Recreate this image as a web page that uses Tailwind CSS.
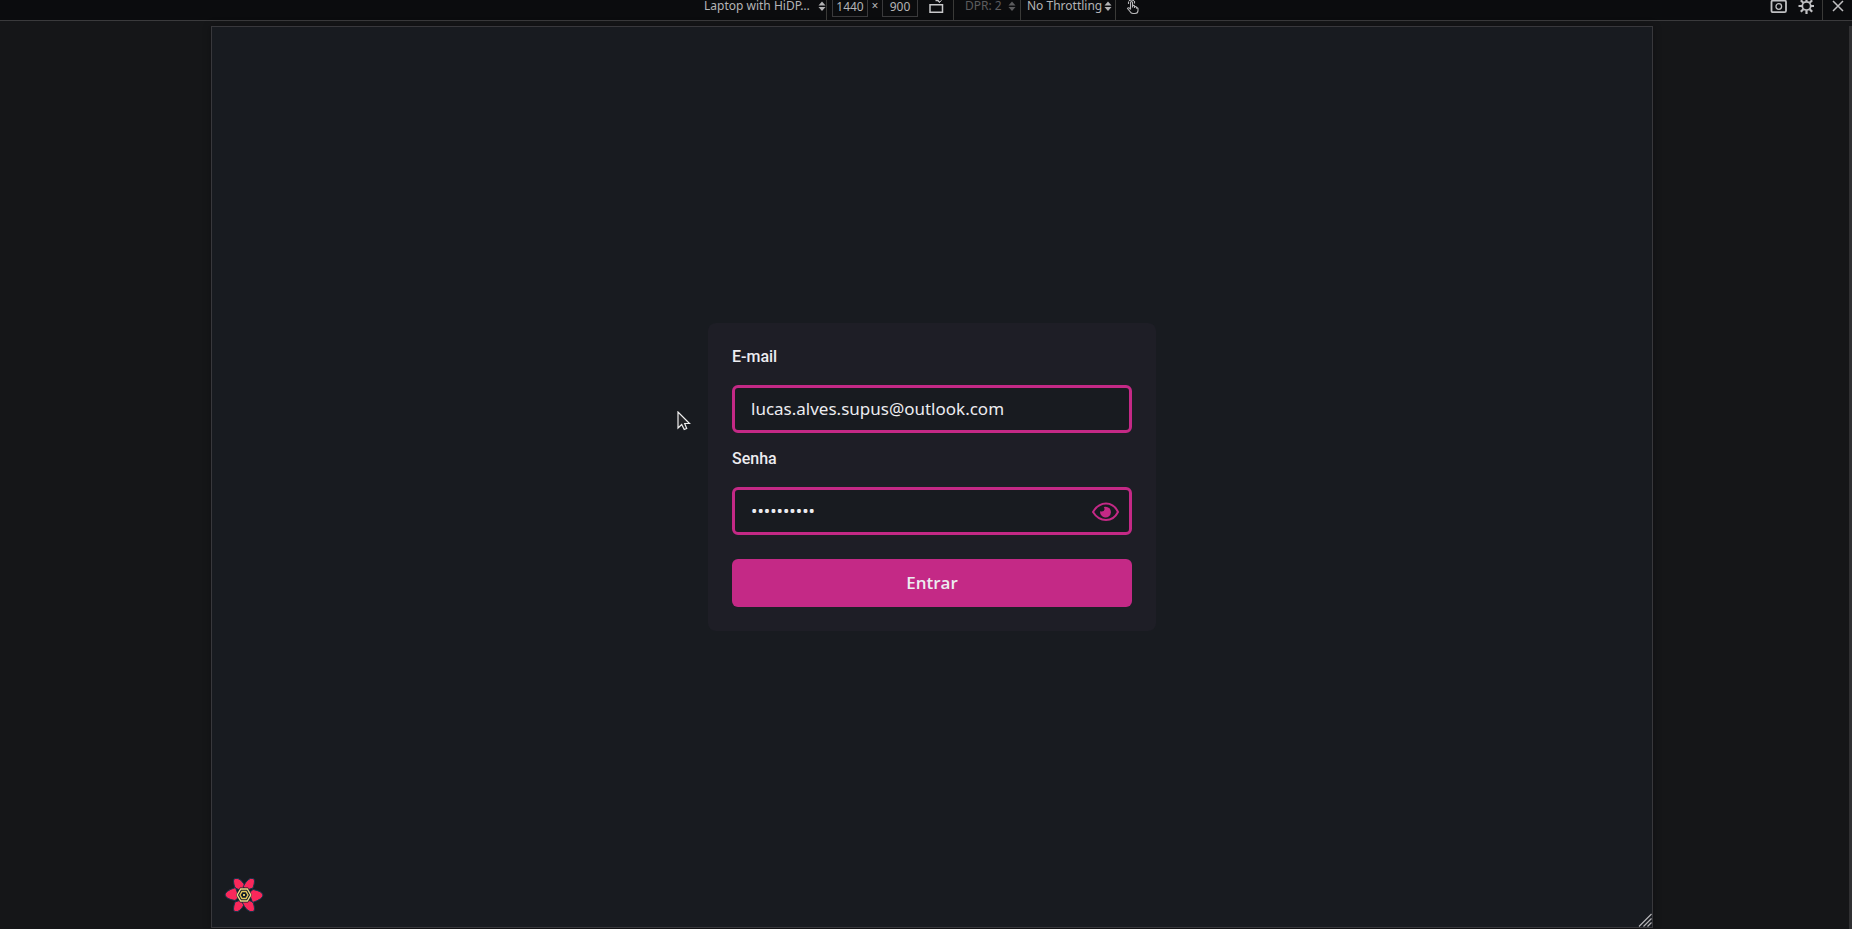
<!DOCTYPE html>
<html lang="pt-BR">
<head>
<meta charset="utf-8">
<title>Entrar</title>
<script src="https://cdn.jsdelivr.net/npm/@tailwindcss/browser@4"></script>
</head>
<body class="min-h-screen flex flex-col bg-[#151618] text-[#b4b4b6] font-['Noto_Sans',sans-serif] overflow-hidden">
<header class="grid grid-cols-[1fr_444px_1fr] h-[21px] bg-[#0b0c0e] border-b border-[#3a3a3c] text-xs leading-3">
  <div></div>
  <div class="flex h-5">
    <div class="flex w-[123px] border-r border-[#3a3a38]">
      <select aria-label="Device" class="appearance-none w-[111px] h-4 leading-4 -mt-0.5"><option>Laptop with HiDP…</option></select>
      <svg class="w-2 h-3 ml-[3px]" viewBox="0 0 8 12" fill="currentColor"><path d="M.5 5.500 4 1.500 7.500 5.500zM.5 7h7L4 11z"/></svg>
    </div>
    <input aria-label="Width" value="1440" class="ml-[5px] w-9 h-[17px] pb-1 border border-t-0 border-[#3a3a3c] text-center">
    <span class="w-[14px] text-center">×</span>
    <input aria-label="Height" value="900" class="w-9 h-[17px] pb-1 border border-t-0 border-[#3a3a3c] text-center">
    <button aria-label="Rotate" class="w-[35px] h-4 pl-[11px]">
      <svg class="block w-4 h-4" viewBox="0 0 16 16" fill="none" stroke="#c8c8ca"><path d="M1 4.700h12.500v7.600H1z" stroke-width="1.500"/><path d="M6.500 .6h1.500q2 0 2.500 1.800" stroke-width="1.300"/><path d="M8.700 0 10.500 2.500 12.500 .2"/></svg>
    </button>
    <div class="flex w-[68px] pl-[11px] border-x border-[#3a3a38] text-[#5c5c5e]">
      <select aria-label="DPR" disabled class="appearance-none w-[43px] h-4 leading-4 -mt-0.5"><option>DPR: 2</option></select>
      <svg class="w-2 h-3" viewBox="0 0 8 12" fill="currentColor"><path d="M.5 5.500 4 1.500 7.500 5.500zM.5 7h7L4 11z"/></svg>
    </div>
    <div class="flex w-[95px] pl-[6px] border-r border-[#3a3a38]">
      <select aria-label="Throttling" class="appearance-none w-[77px] h-4 leading-4 -mt-0.5"><option>No Throttling</option></select>
      <svg class="w-2 h-3" viewBox="0 0 8 12" fill="currentColor"><path d="M.5 5.500 4 1.500 7.500 5.500zM.5 7h7L4 11z"/></svg>
    </div>
    <button aria-label="Touch simulation" class="ml-[9px] h-4 w-4 shrink-0">
      <svg class="block w-4 h-4" viewBox="0 0 16 16" fill="none" stroke="#b8b8ba"><path d="M5.500 9.500V2.500q0-1 1-1t1 1V7.500M7.500 7V5.800q1-1 2 0V8M9.500 7q1-1 2 .2V8q1-.5 1.500.5V10.500q0 3-3 3H8q-2 0-3-2L2.500 8.500q.5-1.300 1.800-.5L5.500 9.500M3.500 4V1.500M9.500 3.500V1M4 .8Q6.500-1 9 .8" stroke-width="1.100"/></svg>
    </button>
  </div>
  <div class="flex justify-end h-5">
    <button aria-label="Screenshot" class="w-7 h-4"><svg class="block w-[18px] h-4" viewBox="0 0 18 16" fill="none" stroke="#c0c0c2"><path d="M3 .5h11.500q1.500 0 1.500 1.500v8.700q0 1.500-1.500 1.500H3q-1.500 0-1.500-1.500V2Q1.500.5 3 .5z" stroke-width="1.800"/><circle cx="8.800" cy="6.500" r="2.800" stroke-width="1.300"/></svg></button>
    <div class="w-[25px] border-r border-[#3a3a38]">
      <button aria-label="Settings" class="block size-4"><svg class="block w-4 h-4" viewBox="0 0 16 16" fill="none" stroke="#c0c0c2"><circle cx="8.500" cy="6" r="4.200" stroke-width="1.800"/><path d="M8.500-2v3.500M8.500 10.500v3.500M.5 6H4M13 6h3.500M2.800.3l2.500 2.500M11.700 9.200l2.500 2.500M14.200.3l-2.500 2.500M5.300 9.200l-2.500 2.500" stroke-width="2.200"/></svg></button>
    </div>
    <button aria-label="Close" class="w-[29px] h-3 pl-[9px]"><svg class="block w-3 h-3" viewBox="0 0 12 12" fill="none" stroke="#c0c0c2" stroke-width="1.500"><path d="M1 1l10 10M11 1 1 11"/></svg></button>
  </div>
</header>
<div class="grow flex justify-center pt-[5px] pb-px pl-3 relative">
  <main class="relative w-[1442px] flex justify-center items-center bg-[#181b20] border border-[#38383c] shadow-[0_0_8px_rgba(0,0,0,0.3)]">
    <form class="w-[448px] p-6 rounded-lg bg-[#1e1e26] flex flex-col text-[#ececf0]">
      <label for="email" class="font-['Roboto',sans-serif] font-medium text-base leading-5">E-mail</label>
      <input id="email" type="email" value="lucas.alves.supus@outlook.com" class="mt-[18px] h-12 px-4 pb-0.5 rounded-md border-3 border-[#c42986] bg-[#181b20] text-[17px]">
      <label for="senha" class="mt-4 font-['Roboto',sans-serif] font-medium text-base leading-5">Senha</label>
      <div class="mt-[18px] h-12 rounded-md border-3 border-[#c42986] bg-[#181b20] flex items-center">
        <input id="senha" type="password" value="1234567890" class="grow min-w-0 h-full px-4 pb-0.5 outline-none text-[17px]">
        <button type="button" aria-label="Mostrar senha" class="mr-[9px]">
          <svg class="block w-7 h-5" viewBox="0 0 28 20"><path d="M1 11Q6 2.500 14 2.500T26 11Q22 19 14 19T1 11z" fill="none" stroke="#c42986" stroke-width="2"/><path d="M13.500 5.700a5.400 5.400 0 1 1-5.300 4.500Q12 11 12.500 8.500 12.600 7 11.800 6z" fill="#c42986"/></svg>
        </button>
      </div>
      <button type="submit" class="mt-6 h-12 rounded-md bg-[#c42986] font-['Open_Sans',sans-serif] text-[17px] font-semibold">Entrar</button>
    </form>
    <button aria-label="Query devtools" class="absolute left-3 bottom-3">
      <svg class="block w-10 h-10" viewBox="-20 -20 40 40"><g fill="#f9285b" stroke="#12384d" stroke-width="1"><path d="M-9-7Q-12-16-9-16.500Q-3-18 2-7L-4-5z"/><path d="M9-7Q12-16 9-16.500Q4-18-1-8L3-5z"/><path d="M-9 7Q-12 16-9 16.500Q-4 18 1 8L-3 5z"/><path d="M9 7Q12 16 9 16.500Q3 18-2 7L4 5z"/><path d="M-8.500-7.500Q-19-4-19 0Q-18 4-9 5.500L-5 2z"/><path d="M8.500 7.500Q19 4 19 0Q18-4 9-5.500L5-2z"/></g><path d="M-4-7.500h8L8 0 4 7.500h-8L-8 0z" fill="#101d29"/><path d="M-3.300-6h6.600L6.800 0 3.300 6h-6.600L-6.800 0z" fill="none" stroke="#efd989" stroke-width="1.400"/><path d="M-2-3.500h4L4 0 2 3.500h-4L-4 0z" fill="none" stroke="#e5c85c" stroke-width="1.400"/><path d="M-1-1h2v2h-2z" fill="#e5c85c"/></svg>
    </button>
    <svg class="absolute right-0 bottom-0 w-[14px] h-[14px]" viewBox="0 0 14 14" stroke="#b4b4b6" stroke-width="1.200"><path d="M1 13.500 13.500 1M5.500 13.500l8-8M9.500 13.500l4-4"/></svg>
    <svg class="absolute left-[465px] top-[384px] w-[14px] h-5" viewBox="0 0 14 20" fill="#242528" stroke="#eee" stroke-width="1.200"><path d="M1 1v16l3.700-3.500 2.500 5 2.500-1-2-5H12.500z"/></svg>
  </main>
  <div class="absolute right-0 top-[5px] bottom-0 w-[3px] bg-[#303032]"></div>
</div>
</body>
</html>
